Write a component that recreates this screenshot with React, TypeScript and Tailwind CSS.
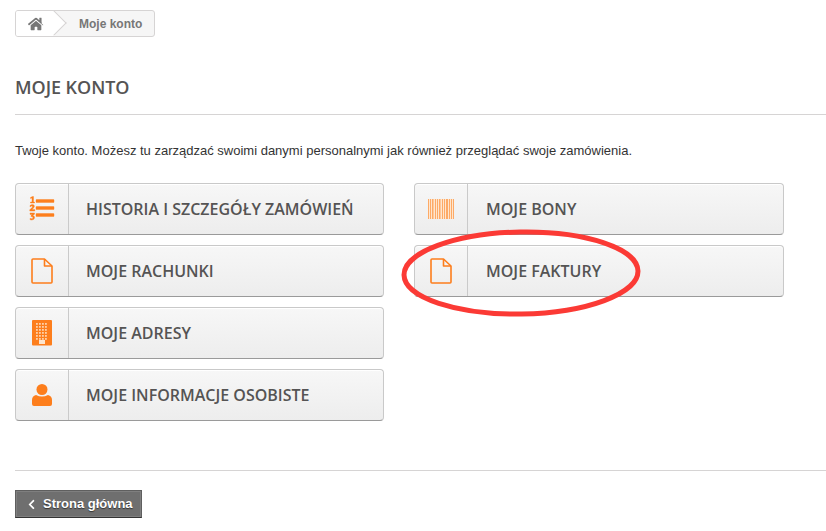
import { FaHome, FaChevronLeft } from "react-icons/fa";
import type { ReactNode } from "react";

function ListIcon() {
  return (
    <svg width="26" height="26" viewBox="0 0 26 26" fill="#fd7e1c" stroke="#fd7e1c" strokeWidth="0.4">
      <rect x="7" y="3.5" width="18" height="3" rx="0.5" />
      <rect x="7" y="10.5" width="18" height="3" rx="0.5" />
      <rect x="7" y="17.5" width="18" height="3" rx="0.5" />
      <path d="M1.5 1.5 L3.5 0.5 H4.5 V6 H5.5 V7 H1.5 V6 H3 V2 L1.5 2.6 Z" />
      <path d="M1 9.5 Q3 8 5 9 Q6 10.5 4.5 12 L3 13.5 H5.8 V15 H0.8 V13.8 L3.4 11.2 Q4 10 2.6 10 L1 10.8 Z" />
      <path d="M1 17 H5.5 V18.2 L3.8 19.6 Q5.8 20 5.6 22 Q5 24 2.6 24 L1 23.6 V22.4 L3 22.8 Q4.2 22.4 3.9 21.2 Q3.4 20.4 2 20.6 V19.6 L3.4 18.4 H1 Z" />
    </svg>
  );
}

function DocIcon() {
  return (
    <svg width="22" height="26" viewBox="0 0 22 26" fill="none" stroke="#fd7e1c" strokeWidth="1.6" strokeLinejoin="round">
      <path d="M2 1 H13.5 L21 8 V24 Q21 25 20 25 H2 Q1 25 1 24 V2 Q1 1 2 1 Z" />
      <path d="M13.5 1 V8 H21" />
    </svg>
  );
}

function BuildingIcon() {
  const dots: ReactNode[] = [];
  for (let row = 0; row < 6; row++) {
    for (let col = 0; col < 4; col++) {
      dots.push(<rect key={`${row}-${col}`} x={4 + col * 3} y={3 + row * 3} width="1.8" height="1.8" fill="#fdd0a8" />);
    }
  }
  return (
    <svg width="20" height="26" viewBox="0 0 20 26">
      <rect x="0" y="0" width="20" height="25.5" rx="1" fill="#fd7e1c" />
      {dots}
      <rect x="7" y="20" width="6" height="4" fill="#fde4cc" />
    </svg>
  );
}

function UserIcon() {
  return (
    <svg width="20" height="22" viewBox="0 0 20 22" fill="#fd7e1c">
      <circle cx="10" cy="5.5" r="5.5" />
      <path d="M0 20 V16 Q0 12 4 11 Q10 14 16 11 Q20 12 20 16 V20 Q20 22 18 22 H2 Q0 22 0 20 Z" />
    </svg>
  );
}

function BarcodeIcon() {
  const bars = [
    [0, 1], [2, 1], [4, 1.5], [7, 1], [9, 1], [11, 1.5], [14, 1], [16, 1], [18, 2], [21, 1], [23, 1], [25, 1],
  ];
  return (
    <svg width="26" height="20" viewBox="0 0 26 20">
      <rect width="26" height="20" fill="#fee6cf" />
      {bars.map(([x, w]) => (
        <rect key={x} x={x} y="0" width={w} height="20" fill="#fdaa66" />
      ))}
    </svg>
  );
}

function AccountButton({ icon, label, wide }: { icon: ReactNode; label: string; wide?: boolean }) {
  return (
    <a className={`flex h-[52px] rounded-[4px] border border-[#c9c9c9] border-b-[#9a9a9a] bg-gradient-to-b from-[#f7f7f7] to-[#ededed] shadow-[inset_0_1px_0_#fff] ${wide ? "w-[370px]" : "w-[369px]"}`}>
      <span className="flex w-[53px] shrink-0 items-center justify-center border-r border-[#cacaca]">{icon}</span>
      <span className={`flex items-center pb-[1px] font-['Open_Sans',sans-serif] text-[16px] font-semibold text-[#555454] ${wide ? "pl-[18px]" : "pl-[17px]"}`}>
        {label}
      </span>
    </a>
  );
}

export default function App() {
  return (
    <div className="relative h-[531px] w-[826px] overflow-hidden bg-white pl-[15px] pt-[10px] font-['Liberation_Sans',Arial,sans-serif]">
      {/* Breadcrumb */}
      <div className="flex h-[27px] w-[140px] items-center overflow-hidden rounded-[3px] border border-[#d6d4d4] bg-[#f6f6f6]">
        <span className="relative flex h-full w-[39px] items-center justify-center bg-white pl-[1px] text-[#777]">
          <FaHome size={16} />
          <span className="absolute right-[-8px] top-[3px] h-[18px] w-[18px] rotate-45 border-r border-t border-[#d6d4d4] bg-white" />
        </span>
        <span className="pl-[24px] text-[12px] font-bold text-[#777]">Moje konto</span>
      </div>

      <div className="mt-[38px] border-b border-[#d6d4d4] pb-[15px]">
        <h1 className="font-['Open_Sans',sans-serif] text-[18px] leading-[24px] font-semibold tracking-[-0.05px] text-[#555454]">MOJE KONTO</h1>
      </div>

      <p className="mt-[27px] text-[13px] leading-[18px] text-[#333]">
        Twoje konto. Możesz tu zarządzać swoimi danymi personalnymi jak również przeglądać swoje zamówienia.
      </p>

      <div className="mt-[23px] flex gap-[30px]">
        <div className="flex flex-col gap-[10px]">
          <AccountButton icon={<ListIcon />} label="HISTORIA I SZCZEGÓŁY ZAMÓWIEŃ" />
          <AccountButton icon={<DocIcon />} label="MOJE RACHUNKI" />
          <AccountButton icon={<BuildingIcon />} label="MOJE ADRESY" />
          <AccountButton icon={<UserIcon />} label="MOJE INFORMACJE OSOBISTE" />
        </div>
        <div className="flex flex-col gap-[10px]">
          <AccountButton wide icon={<BarcodeIcon />} label="MOJE BONY" />
          <AccountButton wide icon={<DocIcon />} label="MOJE FAKTURY" />
        </div>
      </div>

      <div className="mt-[49px] border-t border-[#d6d4d4]" />

      <a className="mt-[19px] flex h-[28px] w-[127px] items-center border border-[#5f5f5f] border-b-[#333] bg-[#6f6f6f] pl-[10px] text-[13px] font-bold text-white shadow-[inset_0_0_0_1px_#7f7f7f]">
        <FaChevronLeft size={11} />
        <span className="pl-[6px] [text-shadow:0_1px_1px_#333]">Strona główna</span>
      </a>

      {/* Hand-drawn highlight around the invoices button */}
      <svg className="absolute left-[400px] top-[228px]" width="244" height="90" viewBox="0 0 244 90" fill="none">
        <ellipse cx="121" cy="45" rx="117" ry="41" stroke="#fb3a35" strokeWidth="5" transform="rotate(-1 121 45)" />
      </svg>
    </div>
  );
}
